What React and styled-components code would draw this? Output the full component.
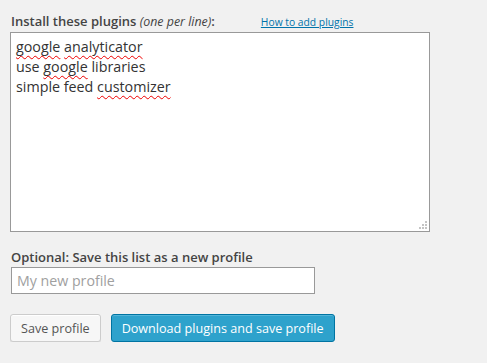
import React, { useState } from 'react'
import styled, { createGlobalStyle } from 'styled-components'

const GlobalStyle = createGlobalStyle`
    html, body {
        margin: 0;
        padding: 0;
        background: #f1f1f1;
    }
    body {
        font-family: "Open Sans", "Liberation Sans", sans-serif;
        color: #444;
    }
`

const Wrapper = styled.form`
    display: flex;
    flex-direction: column;
    padding: 12px 10px 0 10px;
    width: 420px;
`

const Header = styled.div`
    display: flex;
    align-items: baseline;
    padding-left: 1px;
    height: 20px;
`

const Label = styled.label`
    font-size: 13px;
    font-weight: 600;
    color: #444;
    & > em {
        font-weight: 400;
        font-size: 12.4px;
    }
`

const HelpLink = styled.a`
    margin-left: 46px;
    font-size: 10.3px;
    color: #0073aa;
    text-decoration: underline;
    cursor: pointer;
`

const ListBox = styled.div`
    position: relative;
    box-sizing: border-box;
    width: 420px;
    height: 200px;
    padding: 4px 5px;
    border: 1px solid #999;
    background: #fff;
    font-size: 14.3px;
    line-height: 20px;
    color: #333;
    white-space: pre;
    &:focus {
        outline: none;
    }
`

const Misspelled = styled.span`
    text-decoration: underline wavy #e00;
    text-decoration-thickness: 1px;
    text-underline-offset: 3px;
    text-decoration-skip-ink: none;
`

const Grip = styled.svg`
    position: absolute;
    right: 1px;
    bottom: 1px;
    width: 11px;
    height: 11px;
`

const ProfileLabel = styled.label`
    margin-top: 16px;
    padding-left: 1px;
    font-size: 13px;
    font-weight: 600;
    color: #444;
    line-height: 18px;
`

const ProfileInput = styled.input`
    box-sizing: border-box;
    width: 304px;
    height: 27px;
    margin: 1px 0 0 1px;
    padding: 0 5px;
    border: 1px solid #999;
    background: #fff;
    font-family: "Open Sans", "Liberation Sans", sans-serif;
    font-size: 14.2px;
    color: #333;
    &::placeholder {
        color: #a0a0a0;
    }
    &:focus {
        outline: none;
    }
`

const Actions = styled.div`
    display: flex;
    gap: 10px;
    margin-top: 20px;
`

const Button = styled.button`
    box-sizing: border-box;
    height: 28px;
    padding: 0 10px;
    border-radius: 3px;
    font-family: "Open Sans", "Liberation Sans", sans-serif;
    font-size: 12.6px;
    cursor: pointer;
    border: 1px solid ${({ $primary }) => ($primary ? '#0074a2' : '#ccc')};
    background: ${({ $primary }) => ($primary ? '#2ea2cc' : '#f7f7f7')};
    color: ${({ $primary }) => ($primary ? '#fff' : '#555')};
    box-shadow: ${({ $primary }) =>
        $primary ? 'inset 0 1px 0 rgba(120,200,230,.5)' : 'inset 0 1px 0 #fff, 0 1px 0 rgba(0,0,0,.08)'};
`

const plugins = [
    [['google', true], [' '], ['analyticator', true]],
    [['use '], ['google', true], [' libraries']],
    [['simple feed '], ['customizer', true]],
]

export default function App() {
    const [profile, setProfile] = useState('')
    return (
        <>
            <GlobalStyle />
            <Wrapper onSubmit={(e) => e.preventDefault()}>
                <Header>
                    <Label>Install these plugins <em>(one per line)</em>:</Label>
                    <HelpLink>How to add plugins</HelpLink>
                </Header>
                <ListBox contentEditable suppressContentEditableWarning spellCheck={false}>
                    {plugins.map((line, i) => (
                        <div key={i}>
                            {line.map(([word, bad], j) =>
                                bad ? <Misspelled key={j}>{word}</Misspelled> : <span key={j}>{word}</span>
                            )}
                        </div>
                    ))}
                    <Grip viewBox="0 0 11 11" contentEditable={false}>
                        {[[8, 2], [5, 5], [8, 5], [2, 8], [5, 8], [8, 8]].map(([x, y]) => (
                            <rect key={`${x}-${y}`} x={x} y={y} width="2" height="2" fill="#c4c4c4" />
                        ))}
                    </Grip>
                </ListBox>
                <ProfileLabel>Optional: Save this list as a new profile</ProfileLabel>
                <ProfileInput
                    type="text"
                    placeholder="My new profile"
                    value={profile}
                    onChange={(e) => setProfile(e.target.value)}
                />
                <Actions>
                    <Button type="button">Save profile</Button>
                    <Button type="submit" $primary>Download plugins and save profile</Button>
                </Actions>
            </Wrapper>
        </>
    )
}
